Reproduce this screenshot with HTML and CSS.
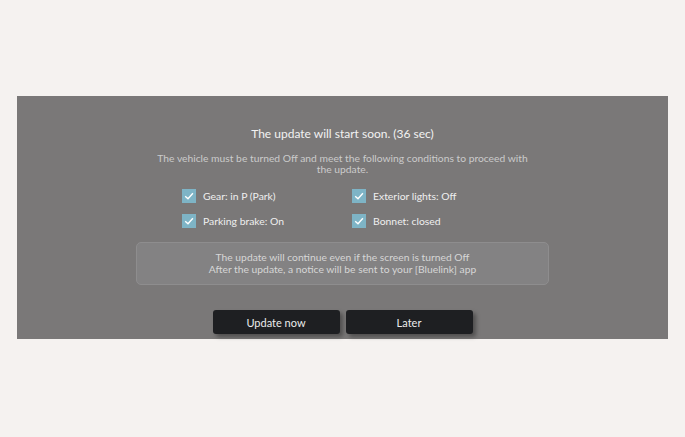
FILE: index.html
```html
<!DOCTYPE html>
<html lang="en">
<head>
<meta charset="utf-8">
<title>Software update</title>
<link rel="stylesheet" href="styles.css">
</head>
<body>
<main class="panel">
  <h1 class="title">The update will start soon. (36 sec)</h1>
  <p class="subtitle">The vehicle must be turned Off and meet the following conditions to proceed with<br>the update.</p>
  <ul class="conditions">
    <li class="cond"><span class="box"><svg viewBox="0 0 14 14"><path d="M3.2 7.2 L6 9.8 L10.9 4.3"/></svg></span>Gear: in P (Park)</li>
    <li class="cond"><span class="box"><svg viewBox="0 0 14 14"><path d="M3.2 7.2 L6 9.8 L10.9 4.3"/></svg></span>Exterior lights: Off</li>
    <li class="cond"><span class="box"><svg viewBox="0 0 14 14"><path d="M3.2 7.2 L6 9.8 L10.9 4.3"/></svg></span>Parking brake: On</li>
    <li class="cond"><span class="box"><svg viewBox="0 0 14 14"><path d="M3.2 7.2 L6 9.8 L10.9 4.3"/></svg></span>Bonnet: closed</li>
  </ul>
  <div class="notice">
    <p>The update will continue even if the screen is turned Off</p>
    <p>After the update, a notice will be sent to your [Bluelink] app</p>
  </div>
  <div class="actions">
    <button class="btn">Update now</button>
    <button class="btn">Later</button>
  </div>
</main>
</body>
</html>
```
FILE: styles.css
```css
html, body {
  margin: 0;
  padding: 0;
}

body {
  background: #f5f2f0;
  font-family: "Lato", "Open Sans", sans-serif;
  width: 685px;
  height: 437px;
  overflow: hidden;
}

.panel {
  margin: 96px 0 0 17px;
  width: 651px;
  height: 243px;
  box-sizing: border-box;
  background: #7a7878;
  padding-top: 30px;
  display: flex;
  flex-direction: column;
  align-items: center;
  text-align: center;
}

.title {
  margin: 0;
  font-size: 12px;
  line-height: 16px;
  font-weight: 400;
  color: #f2f2f2;
}

.subtitle {
  margin: 11px 0 0;
  font-size: 10.3px;
  line-height: 11px;
  color: #cbcbcb;
}

.conditions {
  list-style: none;
  margin: 14px 0 0;
  padding: 0;
  display: grid;
  grid-template-columns: 170px 151px;
  row-gap: 11px;
}

.cond {
  display: flex;
  align-items: center;
  gap: 7px;
  font-size: 10.4px;
  line-height: 14px;
  color: #efefef;
  text-align: left;
}

.box {
  width: 14px;
  height: 14px;
  background: #7eb4c6;
  display: flex;
}

.box svg {
  width: 14px;
  height: 14px;
  fill: none;
  stroke: #ffffff;
  stroke-width: 1.4;
}

.notice {
  margin-top: 14px;
  width: 413px;
  height: 43px;
  box-sizing: border-box;
  background: #838283;
  border: 1px solid #8e8d8e;
  border-radius: 5px;
  display: flex;
  flex-direction: column;
  justify-content: center;
  gap: 1px;
}

.notice p {
  margin: 0;
  font-size: 10.3px;
  line-height: 11px;
  color: #d6d6d6;
}

.actions {
  margin-top: 25px;
  display: flex;
  gap: 6px;
}

.btn {
  width: 127px;
  height: 24px;
  border: none;
  border-radius: 3px;
  background: #1e1f22;
  color: #ececec;
  font-family: inherit;
  font-size: 11px;
  box-shadow: 3px 3px 4px rgba(0, 0, 0, 0.35);
  padding: 0;
}
```
